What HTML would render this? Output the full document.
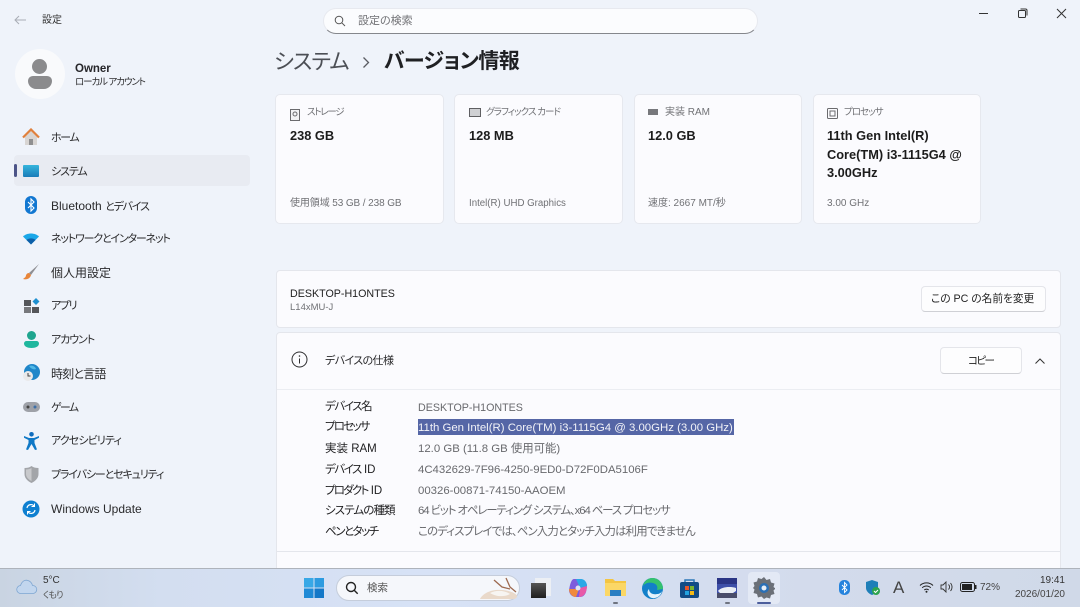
<!DOCTYPE html>
<html lang="ja"><head><meta charset="utf-8"><title>設定</title>
<style>
html,body{margin:0;padding:0;width:1080px;height:607px;overflow:hidden;background:#eff3fa}
body{position:relative;font-family:"Liberation Sans","Noto Sans CJK JP",sans-serif;font-size:11px;color:#1c1c1c;font-feature-settings:"palt"}
.t{position:absolute;white-space:nowrap;line-height:14px}
.b{position:absolute;box-sizing:border-box}
.card{position:absolute;box-sizing:border-box;background:#fbfbfe;border:1px solid #e6e8ee;border-radius:5px;top:94px;height:130px;width:169px}
.g{color:#707175}
.nav{left:51px;color:#2a2a2c;font-size:12px}
.n{font-size:11px}
.k{left:325px;color:#1e1e20;font-size:11.5px}
.v{left:418px;color:#68696d;font-size:11.4px}
.h{font-weight:700;font-size:12.8px;color:#1c1c1c;line-height:18.7px}
.s{position:absolute}
</style></head><body>

<!-- title bar -->
<svg class="s" style="left:13px;top:14px" width="14" height="12" viewBox="0 0 14 12"><path d="M13 6H2M6 2L2 6l4 4" fill="none" stroke="#a9adb5" stroke-width="1"/></svg>
<div class="t" style="left:42px;top:14px;font-size:10px;color:#333">設定</div>

<!-- search -->
<div class="b" style="left:323px;top:8px;width:435px;height:26px;background:#fbfcfe;border:1px solid #e7e9ef;border-bottom:1px solid #85878c;border-radius:13px"></div>
<svg class="s" style="left:334px;top:15px" width="12" height="12" viewBox="0 0 12 12"><circle cx="5" cy="5" r="3.800" fill="none" stroke="#555" stroke-width="1"/><path d="M7.800 7.800l3.200 3.200" stroke="#555" stroke-width="1"/></svg>
<div class="t g" style="left:358px;top:14px;font-size:11px">設定の検索</div>

<!-- window controls -->
<div class="b" style="left:979px;top:13px;width:9px;height:1px;background:#333"></div>
<svg class="s" style="left:1017px;top:8px" width="11" height="11" viewBox="0 0 11 11"><rect x="1.500" y="2.500" width="7" height="7" rx="1" fill="none" stroke="#333"/><path d="M3.500 1h5a1.500 1.500 0 0 1 1.500 1.500v5" fill="none" stroke="#333"/></svg>
<svg class="s" style="left:1056px;top:8px" width="11" height="11" viewBox="0 0 11 11"><path d="M1 1l9 9M10 1l-9 9" stroke="#333" stroke-width="1"/></svg>

<!-- user -->
<div class="b" style="left:15px;top:49px;width:50px;height:50px;border-radius:50%;background:#f9fafc"></div>
<div class="b" style="left:32px;top:59px;width:15px;height:15px;border-radius:50%;background:#8b8b8d"></div>
<div class="b" style="left:28px;top:76px;width:24px;height:13px;border-radius:6px 6px 10px 10px;background:#8b8b8d"></div>
<div class="t" style="left:75px;top:62px;font-weight:700;font-size:11.500px;color:#26262a">Owner</div>
<div class="t" style="left:75px;top:76px;font-size:9.500px;letter-spacing:-1.100px;color:#2e2e30">ローカル アカウント</div>

<!-- nav -->
<div class="b" style="left:14px;top:155px;width:236px;height:31px;background:#e8ebf2;border-radius:4px"></div>
<div class="b" style="left:14px;top:164px;width:3px;height:13px;background:#4c5488;border-radius:2px"></div>

<svg class="s" style="left:22px;top:128px" width="18" height="18" viewBox="0 0 18 18"><path d="M3 9v8h12V9L9 3z" fill="#d8d5d3"/><rect x="7" y="11" width="4" height="6" fill="#8f8f90"/><path d="M1 9.500L9 1.500l8 8" fill="none" stroke="#e0803c" stroke-width="2.200"/></svg>
<div class="t nav n" style="top:131px;letter-spacing:-1.400px">ホーム</div>

<div class="b" style="left:23px;top:165px;width:16px;height:12px;border-radius:1px;background:linear-gradient(#35b5dc,#1a7cb8)"></div>
<div class="t nav n" style="top:165px;letter-spacing:-1.100px">システム</div>

<svg class="s" style="left:24px;top:196px" width="14" height="18" viewBox="0 0 14 18"><rect x="1" y="0" width="12" height="18" rx="6" fill="#1277d1"/><path d="M4 6l6 6-3 3V3l3 3-6 6" fill="none" stroke="#fff" stroke-width="1.100"/></svg>
<div class="t nav" style="top:199px">Bluetooth <span style="font-size:11px;letter-spacing:-1.200px">とデバイス</span></div>

<svg class="s" style="left:23px;top:232px" width="16" height="13" viewBox="0 0 16 13"><path d="M0 4.500C4 .5 12 .5 16 4.500L8 12.500z" fill="#1aa7e8"/><path d="M3.500 8C6 5.800 10 5.800 12.500 8L8 12.500z" fill="#0d5fa8"/></svg>
<div class="t nav n" style="top:232px;letter-spacing:-1.200px">ネットワークとインターネット</div>

<svg class="s" style="left:22px;top:263px" width="18" height="18" viewBox="0 0 18 18"><path d="M17 1L7 10l2 2z" fill="#8f8f94"/><path d="M7 10c-3 0-3 3-3.500 4L1 16c3 1 7 0 8-4z" fill="#e8853a"/></svg>
<div class="t nav" style="top:266px">個人用設定</div>

<svg class="s" style="left:24px;top:298px" width="16" height="16" viewBox="0 0 16 16"><rect x="0" y="2" width="7" height="6" fill="#55565a"/><rect x="0" y="9" width="7" height="6" fill="#77787c"/><rect x="8" y="9" width="7" height="6" fill="#55565a"/><path d="M12 0l3.500 3.500L12 7 8.500 3.500z" fill="#1d8fd0"/></svg>
<div class="t nav n" style="top:299px;letter-spacing:-1.400px">アプリ</div>

<svg class="s" style="left:24px;top:331px" width="15" height="17" viewBox="0 0 15 17"><circle cx="7.500" cy="4.500" r="4.500" fill="#1fa58f"/><path d="M0 12.500a2.500 2.500 0 0 1 2.500-2.500h10a2.500 2.500 0 0 1 2.500 2.500c0 3-3.500 4.500-7.500 4.500S0 15.500 0 12.500z" fill="#1fb79e"/></svg>
<div class="t nav n" style="top:333px;letter-spacing:-1.100px">アカウント</div>

<svg class="s" style="left:23px;top:364px" width="17" height="18" viewBox="0 0 17 18"><circle cx="9" cy="8" r="8" fill="#1f86c9"/><path d="M6 2c3-1 6 0 7 3-2 1-5 0-7-3z" fill="#52b9e6"/><circle cx="5" cy="12" r="5" fill="#e9e9ea"/><path d="M5 9v3h2.500" fill="none" stroke="#444"/></svg>
<div class="t nav" style="top:367px;letter-spacing:-.8px">時刻と言語</div>

<svg class="s" style="left:23px;top:401px" width="17" height="12" viewBox="0 0 17 12"><rect x="0" y="1" width="17" height="10" rx="5" fill="#9ea1a8"/><circle cx="5" cy="6" r="1.500" fill="#444"/><circle cx="12" cy="6" r="1.500" fill="#3d6fa8"/></svg>
<div class="t nav n" style="top:401px;letter-spacing:-1.700px">ゲーム</div>

<svg class="s" style="left:24px;top:432px" width="15" height="18" viewBox="0 0 15 18"><circle cx="7.500" cy="2.300" r="2.300" fill="#0f6cbd"/><path d="M0 4l5 2h5l5-2 .5 1.500L10.500 8v3l2.500 6.500-2 .5-3.500-6-3.500 6-2-.5L4.500 11V8L-.5 5.500z" fill="#0f78c6"/></svg>
<div class="t nav n" style="top:434px;letter-spacing:-.9px">アクセシビリティ</div>

<svg class="s" style="left:24px;top:466px" width="15" height="17" viewBox="0 0 15 17"><path d="M7.500 0c2 1.500 4.500 2 7 2v6c0 4-3 7-7 9-4-2-7-5-7-9V2c2.500 0 5-.5 7-2z" fill="#a3a5a9"/><path d="M7.500 2v13c-3-1.500-5.500-4-5.500-7V3.500c2 0 4-.5 5.500-1.500z" fill="#c8c9cc"/></svg>
<div class="t nav n" style="top:468px;letter-spacing:-1.150px">プライバシーとセキュリティ</div>

<svg class="s" style="left:22px;top:500px" width="18" height="18" viewBox="0 0 18 18"><circle cx="9" cy="9" r="8.500" fill="#0e7fd0"/><path d="M5 8a4 4 0 0 1 7-2M13 10a4 4 0 0 1-7 2" fill="none" stroke="#fff" stroke-width="1.200"/><path d="M12.500 3.500V6.500H9.500M5.500 14.500V11.500H8.500" fill="none" stroke="#fff"/></svg>
<div class="t nav" style="top:502px">Windows Update</div>

<!-- heading -->
<div class="t" style="left:274px;top:46px;font-size:21.500px;letter-spacing:-.9px;line-height:32px;color:#4c4f55">システム</div>
<svg class="s" style="left:361px;top:56px" width="10" height="13" viewBox="0 0 10 13"><path d="M2.500 1.500l5 5-5 5" fill="none" stroke="#5a5c62" stroke-width="1.300"/></svg>
<div class="t" style="left:384px;top:46px;font-size:21px;letter-spacing:-.6px;line-height:32px;font-weight:700;color:#1f2023">バージョン情報</div>

<!-- cards -->
<div class="card" style="left:275px"></div>
<div class="card" style="left:454px"></div>
<div class="card" style="left:634px;width:168px"></div>
<div class="card" style="left:813px;width:168px"></div>

<svg class="s" style="left:290px;top:109px" width="10" height="12" viewBox="0 0 10 12"><rect x=".5" y=".5" width="9" height="11" fill="#f2f2f4" stroke="#6b6b6e"/><circle cx="5" cy="5" r="2" fill="none" stroke="#6b6b6e"/></svg>
<div class="t g" style="left:307px;top:106px;font-size:9.500px;letter-spacing:-1.300px">ストレージ</div>
<div class="t h" style="left:290px;top:127px">238 GB</div>
<div class="t g" style="left:290px;top:197px;font-size:10px;letter-spacing:-.1px">使用領域 53 GB / 238 GB</div>

<svg class="s" style="left:469px;top:108px" width="12" height="9" viewBox="0 0 12 9"><rect x=".5" y=".5" width="11" height="8" fill="#cfd0d3" stroke="#5f5f62"/></svg>
<div class="t g" style="left:486px;top:106px;font-size:9.500px;letter-spacing:-.95px">グラフィックス カード</div>
<div class="t h" style="left:469px;top:127px">128 MB</div>
<div class="t g" style="left:469px;top:197px;font-size:9.700px">Intel(R) UHD Graphics</div>

<svg class="s" style="left:648px;top:109px" width="10" height="6" viewBox="0 0 10 6"><rect width="10" height="6" fill="#77787c"/></svg>
<div class="t g" style="left:665px;top:106px;font-size:10px">実装 RAM</div>
<div class="t h" style="left:648px;top:127px">12.0 GB</div>
<div class="t g" style="left:648px;top:197px;font-size:10px">速度: 2667 MT/秒</div>

<svg class="s" style="left:827px;top:108px" width="11" height="11" viewBox="0 0 11 11"><rect x=".5" y=".5" width="10" height="10" rx="1" fill="none" stroke="#6b6b6e"/><rect x="3" y="3" width="5" height="5" fill="none" stroke="#6b6b6e"/></svg>
<div class="t g" style="left:844px;top:106px;font-size:9.500px;letter-spacing:-.95px">プロセッサ</div>
<div class="t h" style="left:827px;top:127px">11th Gen Intel(R)<br>Core(TM) i3-1115G4 @<br>3.00GHz</div>
<div class="t g" style="left:827px;top:197px;font-size:10px">3.00 GHz</div>

<!-- device name row -->
<div class="b" style="left:276px;top:270px;width:785px;height:58px;background:#fbfbfe;border:1px solid #e4e6ec;border-radius:4px"></div>
<div class="t" style="left:290px;top:287px;font-size:10.700px;color:#222">DESKTOP-H1ONTES</div>
<div class="t g" style="left:290px;top:301px;font-size:9.500px">L14xMU-J</div>
<div class="b" style="left:921px;top:286px;width:125px;height:26px;background:#fdfdfe;border:1px solid #e4e5ea;border-bottom-color:#cfd0d5;border-radius:4px"></div>
<div class="t" style="left:931px;top:292px;font-size:10.700px;color:#222">この PC の名前を変更</div>

<!-- specs -->
<div class="b" style="left:276px;top:332px;width:785px;height:220px;background:#fbfbfe;border:1px solid #e4e6ec;border-bottom:0;border-radius:4px 4px 0 0"></div>
<div class="b" style="left:277px;top:389px;width:783px;height:1px;background:#ebedf2"></div>
<svg class="s" style="left:291px;top:351px" width="17" height="17" viewBox="0 0 17 17"><circle cx="8.500" cy="8.500" r="7.500" fill="none" stroke="#2c2c2e" stroke-width="1"/><path d="M8.500 7.500v5" stroke="#2c2c2e"/><circle cx="8.500" cy="5" r=".8" fill="#2c2c2e"/></svg>
<div class="t" style="left:325px;top:354px;font-size:11px;letter-spacing:-.6px;color:#2a2a2c">デバイスの仕様</div>
<div class="b" style="left:940px;top:347px;width:82px;height:27px;background:#fdfdfe;border:1px solid #e4e5ea;border-bottom-color:#cfd0d5;border-radius:4px"></div>
<div class="t" style="left:968px;top:354px;font-size:10.500px;letter-spacing:-1.600px;color:#222">コピー</div>
<svg class="s" style="left:1034px;top:357px" width="12" height="8" viewBox="0 0 12 8"><path d="M1.500 6.500L6 2l4.500 4.500" fill="none" stroke="#333" stroke-width="1"/></svg>

<div class="t k" style="top:400px;letter-spacing:-1.400px">デバイス名</div>
<div class="t v" style="top:401px;font-size:10.700px">DESKTOP-H1ONTES</div>
<div class="t k" style="top:420px;letter-spacing:-1.800px">プロセッサ</div>
<div class="b" style="left:418px;top:419px;width:316px;height:16px;background:#5566a6"></div>
<div class="t v" style="top:421px;color:#f2f3f8">11th Gen Intel(R) Core(TM) i3-1115G4 @ 3.00GHz (3.00 GHz)</div>
<div class="t k" style="top:442px">実装 RAM</div>
<div class="t v" style="top:442px">12.0 GB (11.8 GB 使用可能)</div>
<div class="t k" style="top:463px"><span style="letter-spacing:-1.500px">デバイス</span> ID</div>
<div class="t v" style="top:463px">4C432629-7F96-4250-9ED0-D72F0DA5106F</div>
<div class="t k" style="top:484px"><span style="letter-spacing:-1.800px">プロダクト</span> ID</div>
<div class="t v" style="top:484px">00326-00871-74150-AAOEM</div>
<div class="t k" style="top:504px;letter-spacing:-.9px">システムの種類</div>
<div class="t v" style="top:504px;letter-spacing:-1.100px">64 ビット オペレーティング システム、x64 ベース プロセッサ</div>
<div class="t k" style="top:525px;letter-spacing:-1.500px">ペンとタッチ</div>
<div class="t v" style="top:525px;letter-spacing:-.83px">このディスプレイでは、ペン入力とタッチ入力は利用できません</div>

<div class="b" style="left:276px;top:551px;width:785px;height:18px;background:#fbfbfe;border:1px solid #e4e6ec;border-bottom:0"></div>

<!-- taskbar -->
<div class="b" style="left:0;top:568px;width:1080px;height:39px;background:linear-gradient(90deg,#c9d4e2 0,#d3def0 15%,#d7e2f6 40%,#d3dbec 75%,#d0d9e8 100%);border-top:1px solid #aeb3bb"></div>

<svg class="s" style="left:16px;top:578px" width="22" height="17" viewBox="0 0 22 17"><path d="M5 15.500a4 4 0 0 1-.5-8C6 3 9 1.500 12 2.500c2.500.8 4 3 4.500 5A4 4 0 0 1 17 15.500z" fill="#c2d6ee" stroke="#7ea6d2" stroke-width=".8"/></svg>
<div class="t" style="left:43px;top:575px;font-size:10px;line-height:12px;color:#333">5°C</div>
<div class="t" style="left:43px;top:589px;font-size:9px;letter-spacing:-.8px;line-height:12px;color:#555">くもり</div>

<svg class="s" style="left:304px;top:578px" width="20" height="20" viewBox="0 0 20 20"><rect width="9.500" height="9.500" fill="#38a8e6"/><rect x="10.500" width="9.500" height="9.500" fill="#2d9be0"/><rect y="10.500" width="9.500" height="9.500" fill="#1f8ad6"/><rect x="10.500" y="10.500" width="9.500" height="9.500" fill="#1478c8"/></svg>

<div class="b" style="left:336px;top:575px;width:184px;height:26px;background:#f5f7fb;border:1px solid #c5cddb;border-radius:13px"></div>
<svg class="s" style="left:345px;top:581px" width="14" height="14" viewBox="0 0 14 14"><circle cx="6" cy="6" r="4.500" fill="none" stroke="#222" stroke-width="1.400"/><path d="M9.200 9.200l3.500 3.500" stroke="#222" stroke-width="1.400"/></svg>
<div class="t" style="left:367px;top:581px;font-size:10.500px;color:#555">検索</div>
<svg class="s" style="left:478px;top:577px" width="41" height="23" viewBox="0 0 41 23"><path d="M2 22c3-6 12-10 22-9 7 .5 14 3 15 6 0 2-2 3-4 3z" fill="#e9d9ca"/><path d="M12 16c6-3 14-3 20 1-5 3-14 3-20-1z" fill="#f7f5f2"/><path d="M16 3l8 7 8 2M28 1l4 9 6 5" fill="none" stroke="#9d6a50" stroke-width="1.300"/></svg>

<!-- task icons -->
<div class="b" style="left:535px;top:578px;width:16px;height:18px;background:#eceff4"></div>
<div class="b" style="left:531px;top:583px;width:15px;height:15px;background:linear-gradient(#555,#1e1e1e)"></div>

<svg class="s" style="left:568px;top:578px" width="20" height="20" viewBox="0 0 20 20"><path d="M6 1h6c3 0 7 3 7 7l-1 6c-1 3-3 5-6 5H8c-4 0-7-3-7-7l1-5c1-3 2-6 4-6z" fill="#7d5cdc"/><path d="M8 1h5c3 0 6 3 6 7l-7 2z" fill="#2ba8e6"/><path d="M1 11c0 4 3 8 7 8l3-8z" fill="#f08a3c"/><path d="M19 8c0 6-3 11-8 11l1-9z" fill="#e85aa8"/><circle cx="10" cy="10" r="2.500" fill="#dfe1f5"/></svg>

<svg class="s" style="left:605px;top:578px" width="21" height="18" viewBox="0 0 21 18"><path d="M0 1h8l2 2h11v15H0z" fill="#f4c542"/><rect x="0" y="5" width="21" height="13" fill="#fbd766"/><rect x="5" y="12" width="11" height="6" fill="#2a7ec2"/></svg>
<div class="b" style="left:613px;top:602px;width:5px;height:2px;background:#6f7480;border-radius:1px"></div>

<svg class="s" style="left:642px;top:578px" width="21" height="21" viewBox="0 0 21 21"><circle cx="10.500" cy="10.500" r="10.500" fill="#1380c9"/><path d="M21 11c0-6-4.500-11-10.500-11C6 0 2 3 1 8c2-3 6-4 10-3 4 1 5 4 4 7z" fill="#35c26f"/><path d="M7 11c0 4 4 6 8 5 2 0 4-1 5-3-1 5-6 8-10 7-4-1-6-6-3-9z" fill="#e4f2fb"/></svg>

<svg class="s" style="left:680px;top:579px" width="19" height="19" viewBox="0 0 19 19"><rect x="0" y="3" width="19" height="16" rx="2" fill="#124c86"/><path d="M5 3V1h9v2" fill="none" stroke="#2c78b8" stroke-width="1.500"/><rect x="5" y="7" width="4" height="4" fill="#e8562a"/><rect x="10" y="7" width="4" height="4" fill="#7ab52e"/><rect x="5" y="12" width="4" height="4" fill="#22a3e0"/><rect x="10" y="12" width="4" height="4" fill="#f5ba16"/></svg>

<svg class="s" style="left:717px;top:578px" width="20" height="20" viewBox="0 0 20 20"><rect width="20" height="20" fill="#3d4fa8"/><rect y="0" width="20" height="6" fill="#2a3585"/><path d="M1 13c3-4 12-5 18-3v3l-3 2H3z" fill="#e9eef5"/><rect y="15" width="20" height="5" fill="#494d6a"/></svg>
<div class="b" style="left:725px;top:602px;width:5px;height:2px;background:#6f7480;border-radius:1px"></div>

<div class="b" style="left:748px;top:572px;width:32px;height:32px;background:#e3e9f5;border-radius:4px"></div>
<svg class="s" style="left:753px;top:577px" width="22" height="22" viewBox="0 0 22 22"><path d="M11 0l2.500 3 3.500-1 1 3.500 3.500 1-1 3.500 2 1.500-2 2 1 3.500-3.500 1-1 3.500-3.500-1L11 22l-2.500-2.500-3.500 1-1-3.500-3.500-1 1-3.500L0 11l1.500-2-1-3.500 3.500-1 1-3.500 3.500 1z" fill="#6b7078"/><circle cx="11" cy="11" r="5" fill="#2a6fb5"/><circle cx="11" cy="11" r="2.500" fill="#e6edf6"/></svg>
<div class="b" style="left:757px;top:602px;width:14px;height:2px;background:#4c5e9c;border-radius:1px"></div>

<!-- tray -->
<svg class="s" style="left:839px;top:580px" width="11" height="15" viewBox="0 0 11 15"><rect width="11" height="15" rx="5" fill="#2583dd"/><path d="M3 5l5 5-2.500 2.500v-10L8 5l-5 5" fill="none" stroke="#fff" stroke-width=".9"/></svg>
<svg class="s" style="left:865px;top:580px" width="15" height="16" viewBox="0 0 15 16"><path d="M7 0l6 2v6c0 3-3 6-6 7-3-1-6-4-6-7V2z" fill="#1e7fb8"/><circle cx="11" cy="11" r="4" fill="#2da44e"/><path d="M9 11l1.500 1.500L13 10" fill="none" stroke="#fff"/></svg>
<div class="t" style="left:893px;top:578px;font-size:17px;line-height:20px;color:#444">A</div>
<svg class="s" style="left:919px;top:581px" width="15" height="12" viewBox="0 0 15 12"><path d="M1 4.500c3.500-3.500 9.500-3.500 13 0M3.200 6.800c2.500-2.400 6.100-2.400 8.600 0M5.300 9c1.200-1.200 3.200-1.200 4.400 0" fill="none" stroke="#222" stroke-width="1"/><circle cx="7.500" cy="10.800" r="1" fill="#222"/></svg>
<svg class="s" style="left:940px;top:581px" width="14" height="12" viewBox="0 0 14 12"><path d="M1 4h2l3-3v10L3 8H1z" fill="none" stroke="#333" stroke-width=".9"/><path d="M8.500 3.500a3.500 3.500 0 0 1 0 5M10.500 2a6 6 0 0 1 0 8" fill="none" stroke="#333" stroke-width=".9"/></svg>
<svg class="s" style="left:960px;top:582px" width="17" height="10" viewBox="0 0 17 10"><rect x=".5" y=".5" width="14" height="9" rx="2" fill="none" stroke="#222"/><rect x="2" y="2" width="10" height="6" fill="#222"/><rect x="15" y="3" width="1.500" height="4" fill="#222"/></svg>
<div class="t" style="left:980px;top:581px;font-size:10px;color:#444">72%</div>
<div class="t" style="right:15px;top:575px;font-size:10px;line-height:12px;color:#333">19:41</div>
<div class="t" style="right:15px;top:589px;font-size:10px;line-height:12px;color:#444">2026/01/20</div>

</body></html>
